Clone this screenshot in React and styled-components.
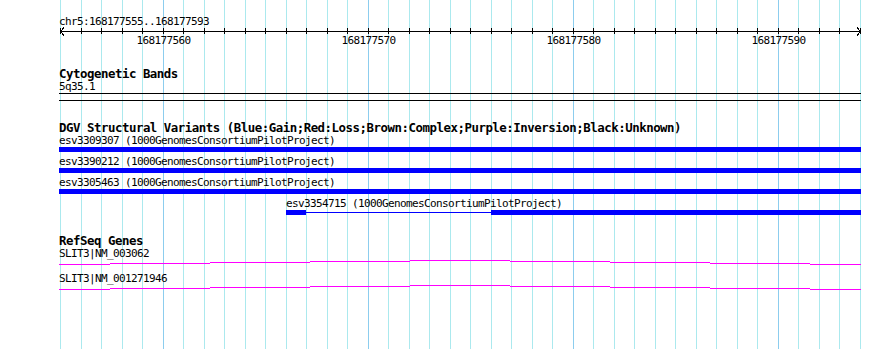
import React from 'react';
import styled, { createGlobalStyle } from 'styled-components';

const START = 168177555;
const BASES = 39;
const LEFT = 59; // x of the first drawn pixel of a track
const TRACK_WIDTH = 802;

// x of the grid line / ruler tick for base k
const gridX = (k) => Math.round(60.3 + 20.5 * k);

const GlobalStyle = createGlobalStyle`
    body {
        margin: 0;
        background: #ffffff;
    }
`;

const Panel = styled.div`
    position: relative;
    width: 890px;
    height: 349px;
    overflow: hidden;
    background: #ffffff;
    font-family: "DejaVu Sans Mono", "Liberation Mono", monospace;
    color: #000000;
`;

const GridLayer = styled.svg`
    position: absolute;
    top: 0;
    left: 0;
    z-index: 0;
`;

const Content = styled.div`
    position: relative;
    z-index: 1;
    width: ${TRACK_WIDTH}px;
    padding: 15px 0 0 ${LEFT}px;
`;

/* gd small font: 6px cells */
const SmallText = styled.div`
    height: 13px;
    line-height: 13px;
    font-size: 11px;
    letter-spacing: -0.62px;
    white-space: nowrap;
`;

/* gd medium bold font: 7px cells */
const TrackTitle = styled.div`
    height: 13px;
    line-height: 13px;
    font-size: 12.4px;
    letter-spacing: -0.47px;
    font-weight: bold;
    white-space: nowrap;
`;

const Axis = styled.svg`
    display: block;
    margin-top: -1px;
    overflow: visible;
`;

const TickLabels = styled.div`
    position: relative;
    height: 13px;
`;

const TickLabel = styled(SmallText)`
    position: absolute;
    top: 0;
    transform: translateX(-50%);
`;

const Track = styled.section`
    margin-top: ${(p) => p.$gap}px;
`;

const Band = styled.div`
    width: ${TRACK_WIDTH}px;
    height: 6px;
    border-top: 1px solid #000000;
    border-bottom: 1px solid #000000;
`;

const FeatureRow = styled.div`
    margin-bottom: ${(p) => p.$gap}px;
`;

const Glyph = styled.div`
    display: flex;
    align-items: center;
    height: 5px;
`;

const Segment = styled.div`
    flex: none;
    height: ${(p) => (p.$thin ? 1 : 5)}px;
    background: #0000ff;
`;

const HatLine = styled.svg`
    display: block;
`;

const variants = [
    { id: 'esv3309307', x: 59, segments: [{ w: 802 }] },
    { id: 'esv3390212', x: 59, segments: [{ w: 802 }] },
    { id: 'esv3305463', x: 59, segments: [{ w: 802 }] },
    { id: 'esv3354715', x: 286, segments: [{ w: 20 }, { w: 185, thin: true }, { w: 370 }] },
];

const genes = ['SLIT3|NM_003062', 'SLIT3|NM_001271946'];

// intron drawn as a very flat hat: steps up towards the middle and back down
const hatSteps = [59, 110, 210, 310, 410, 510, 610, 710, 810, 861];
const hatLevels = [4, 3, 2, 1, 0, 1, 2, 3, 4];

const ticks = Array.from({ length: BASES + 1 }, (_, k) => k);
const majorTicks = ticks.filter((k) => (START + k) % 10 === 0);

const Grid = () => (
    <GridLayer width="890" height="349" shapeRendering="crispEdges">
        {ticks.map((k) => (
            <rect
                key={k}
                x={gridX(k)}
                y="0"
                width="1"
                height="349"
                fill={majorTicks.includes(k) ? '#8ccdee' : '#abe9ee'}
            />
        ))}
    </GridLayer>
);

const Ruler = () => (
    <div>
        <SmallText>chr5:168177555..168177593</SmallText>
        <Axis width={TRACK_WIDTH} height="7" shapeRendering="crispEdges">
            <rect x="1" y="4" width={TRACK_WIDTH - 1} height="1" fill="#000" />
            {ticks.map((k) => (
                <rect key={k} x={gridX(k) - LEFT} y="1" width="1" height="6" fill="#000" />
            ))}
            <polyline points="5,0.5 1.5,4.5 5,8.5" fill="none" stroke="#000" strokeWidth="1" />
            <polyline
                points={`${TRACK_WIDTH - 4},0.5 ${TRACK_WIDTH - 0.5},4.5 ${TRACK_WIDTH - 4},8.5`}
                fill="none"
                stroke="#000"
                strokeWidth="1"
            />
        </Axis>
        <TickLabels>
            {majorTicks.map((k) => (
                <TickLabel key={k} style={{ left: gridX(k) - LEFT + 0.5 }}>
                    {START + k}
                </TickLabel>
            ))}
        </TickLabels>
    </div>
);

const App = () => {
    return (
        <Panel>
            <GlobalStyle />
            <Grid />
            <Content>
                <Ruler />

                <Track $gap={20}>
                    <TrackTitle>Cytogenetic Bands</TrackTitle>
                    <SmallText>5q35.1</SmallText>
                    <Band />
                </Track>

                <Track $gap={20}>
                    <TrackTitle>
                        DGV Structural Variants (Blue:Gain;Red:Loss;Brown:Complex;Purple:Inversion;Black:Unknown)
                    </TrackTitle>
                    {variants.map((v) => (
                        <FeatureRow key={v.id} $gap={3}>
                            <SmallText style={{ marginLeft: v.x - LEFT }}>
                                {v.id} (1000GenomesConsortiumPilotProject)
                            </SmallText>
                            <Glyph style={{ marginLeft: v.x - LEFT }}>
                                {v.segments.map((s, i) => (
                                    <Segment key={i} $thin={s.thin} style={{ width: s.w }} />
                                ))}
                            </Glyph>
                        </FeatureRow>
                    ))}
                </Track>

                <Track $gap={19}>
                    <TrackTitle>RefSeq Genes</TrackTitle>
                    {genes.map((g) => (
                        <FeatureRow key={g} $gap={7}>
                            <SmallText>{g}</SmallText>
                            <HatLine width={TRACK_WIDTH} height="5" shapeRendering="crispEdges">
                                {hatLevels.map((lvl, i) => (
                                    <rect
                                        key={i}
                                        x={hatSteps[i] - LEFT}
                                        y={lvl}
                                        width={hatSteps[i + 1] - hatSteps[i]}
                                        height="1"
                                        fill="#ff00ff"
                                    />
                                ))}
                            </HatLine>
                        </FeatureRow>
                    ))}
                </Track>
            </Content>
        </Panel>
    );
};

export default App;
